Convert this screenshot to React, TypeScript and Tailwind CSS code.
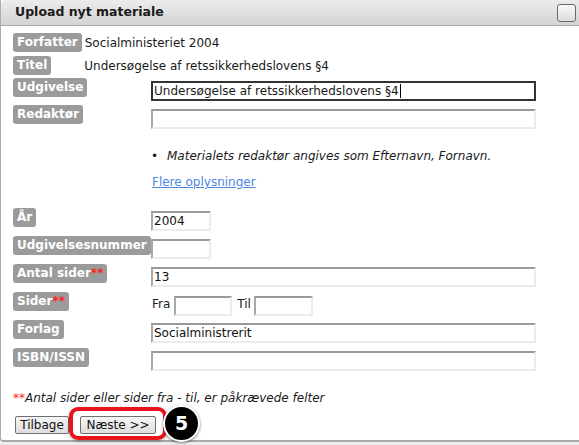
import React from "react";

const font = { fontFamily: '"DejaVu Sans", Verdana, sans-serif' };

function Label({ children }: { children: React.ReactNode }) {
  return (
    <span className="inline-block h-[19px] leading-[19px] px-[4px] rounded-[3px] bg-[#9b9b9b] text-white font-bold text-[12px] whitespace-nowrap">
      {children}
    </span>
  );
}

function Req() {
  return <span className="text-[#ff2020]">**</span>;
}

function Input({ w, value, mt = 3 }: { w: string; value?: string; mt?: number }) {
  return (
    <div
      className={`${w} h-[20px] ${mt === 4 ? "mt-[4px]" : "mt-[3px]"} border-t-2 border-l-2 border-b-2 border-r-2 border-t-[#9a9a9a] border-l-[#a8a8a8] border-b-[#ececec] border-r-[#ececec] bg-white text-[12px] leading-[16px] pl-[1px] text-[#111] whitespace-nowrap overflow-hidden`}
    >
      {value}
    </div>
  );
}

function Row({ label, children }: { label: React.ReactNode; children?: React.ReactNode }) {
  return (
    <div className="flex h-[28px]">
      <div className="w-[138px] shrink-0">
        <Label>{label}</Label>
      </div>
      <div className="flex items-start">{children}</div>
    </div>
  );
}

export default function App() {
  return (
    <div className="relative w-[579px] h-[445px] bg-[#ededed] overflow-hidden text-[#1a1a1a]" style={font}>
      <div className="h-[442px] bg-white border-l border-b-2 border-[#ababab] rounded-bl-[4px]">
        <div className="h-[26px] flex items-center justify-between bg-gradient-to-b from-[#ececec] to-[#d3d3d3] border-b border-[#a9a9a9] rounded-tl-[5px] pl-[14px] pr-[3px]">
          <span className="font-bold text-[12.5px] text-[#1a1a1a]">Upload nyt materiale</span>
          <div className="w-[19px] h-[18px] rounded-[3px] border-[1.5px] border-[#6a6a6a] bg-gradient-to-b from-[#fafafa] to-[#dcdcdc]" />
        </div>

        <div className="pt-[7px] pl-[12px] text-[12px]">
          <div className="flex h-[23px]">
            <div className="flex items-center h-[19px]">
              <Label>Forfatter</Label>
              <span className="ml-[3px]">Socialministeriet 2004</span>
            </div>
          </div>
          <div className="flex h-[22px]">
            <div className="flex items-center h-[19px]">
              <Label>Titel</Label>
              <span className="ml-[33px]">Undersøgelse af retssikkerhedslovens §4</span>
            </div>
          </div>
          <div className="flex h-[27px]">
            <div className="w-[138px] shrink-0">
              <Label>Udgivelse</Label>
            </div>
            <div className="w-[385px] h-[20px] mt-[3px] border-2 border-[#333] bg-white text-[12px] leading-[16px] pl-[1px] whitespace-nowrap flex items-center">
              <span>Undersøgelse af retssikkerhedslovens §4</span>
              <span className="inline-block w-px h-[14px] bg-black ml-px" />
            </div>
          </div>
          <div className="flex h-[27px]">
            <div className="w-[138px] shrink-0">
              <Label>Redaktør</Label>
            </div>
            <Input w="w-[385px]" mt={4} />
          </div>

          <div className="mt-[16px] pl-[138px] flex items-center h-[16px] leading-[16px] italic">
            <span className="not-italic w-[16px] text-[12px]">•</span>
            <span>Materialets redaktør angives som Efternavn, Fornavn.</span>
          </div>
          <div className="mt-[10px] pl-[139px] h-[16px] leading-[16px]">
            <span className="text-[#4f86e3] underline">Flere oplysninger</span>
          </div>

          <div className="mt-[18px]">
            <Row label="År">
              <Input w="w-[60px]" value="2004" />
            </Row>
            <Row label="Udgivelsesnummer">
              <Input w="w-[60px]" />
            </Row>
            <Row label={<>Antal sider<Req /></>}>
              <Input w="w-[385px]" value="13" />
            </Row>
            <Row label={<>Sider<Req /></>}>
              <div className="flex items-center h-[26px] mt-[-1px]">
                <span className="ml-[1px] mr-[4px]">Fra</span>
                <Input w="w-[58px]" />
                <span className="ml-[5px] mr-[3px]">Til</span>
                <Input w="w-[59px]" />
              </div>
            </Row>
            <Row label="Forlag">
              <Input w="w-[385px]" value="Socialministrerit" />
            </Row>
            <Row label="ISBN/ISSN">
              <Input w="w-[385px]" />
            </Row>
          </div>

          <div className="mt-[14px] h-[16px] leading-[16px] italic">
            <Req />
            Antal sider eller sider fra - til, er påkrævede felter
          </div>

          <div className="mt-[10px] pl-[2px] flex gap-[11px]">
            <button className="h-[18px] w-[54px] border border-[#707070] rounded-[2px] bg-gradient-to-b from-[#f6f6f6] to-[#dedede] text-[12px] leading-[14px] text-[#111]">
              Tilbage
            </button>
            <button className="h-[18px] w-[76px] border border-[#707070] rounded-[2px] bg-gradient-to-b from-[#f6f6f6] to-[#dedede] text-[12px] leading-[14px] text-[#111]">
              Næste &gt;&gt;
            </button>
          </div>
        </div>
      </div>

      <div className="absolute left-[69px] top-[407px] w-[98px] h-[33px] rounded-[9px] border-4 border-[#e8141c] shadow-[0_1px_3px_rgba(0,0,0,0.35)]" />
      <div className="absolute left-[163px] top-[405px] w-[37px] h-[37px] rounded-full bg-black border-2 border-white shadow-[0_1px_3px_rgba(0,0,0,0.5)] flex items-center justify-center text-white font-bold text-[19px]">
        5
      </div>
    </div>
  );
}
